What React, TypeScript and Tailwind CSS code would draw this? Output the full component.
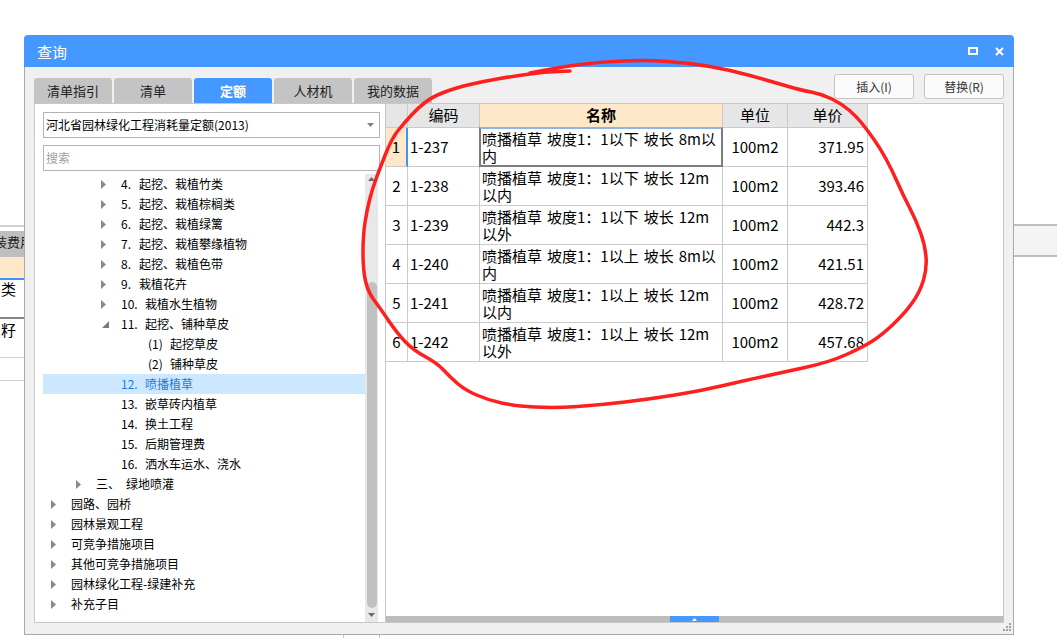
import React from "react";

const FONT = "font-['Noto_Sans_CJK_SC','Noto_Sans',sans-serif]";

type TreeRow = {
  pad: string;
  tri: "c" | "e" | null;
  num?: string;
  numW?: string;
  text: string;
  sel?: boolean;
};

const treeRows: TreeRow[] = [
  { pad: "pl-[58px]", tri: "c", num: "4.", numW: "w-[18px]", text: "起挖、栽植竹类" },
  { pad: "pl-[58px]", tri: "c", num: "5.", numW: "w-[18px]", text: "起挖、栽植棕榈类" },
  { pad: "pl-[58px]", tri: "c", num: "6.", numW: "w-[18px]", text: "起挖、栽植绿篱" },
  { pad: "pl-[58px]", tri: "c", num: "7.", numW: "w-[18px]", text: "起挖、栽植攀缘植物" },
  { pad: "pl-[58px]", tri: "c", num: "8.", numW: "w-[18px]", text: "起挖、栽植色带" },
  { pad: "pl-[58px]", tri: "c", num: "9.", numW: "w-[18px]", text: "栽植花卉" },
  { pad: "pl-[58px]", tri: "c", num: "10.", numW: "w-[24px]", text: "栽植水生植物" },
  { pad: "pl-[58px]", tri: "e", num: "11.", numW: "w-[24px]", text: "起挖、铺种草皮" },
  { pad: "pl-[85px]", tri: null, num: "(1)", numW: "w-[22px]", text: "起挖草皮" },
  { pad: "pl-[85px]", tri: null, num: "(2)", numW: "w-[22px]", text: "铺种草皮" },
  { pad: "pl-[58px]", tri: null, num: "12.", numW: "w-[24px]", text: "喷播植草", sel: true },
  { pad: "pl-[58px]", tri: null, num: "13.", numW: "w-[24px]", text: "嵌草砖内植草" },
  { pad: "pl-[58px]", tri: null, num: "14.", numW: "w-[24px]", text: "换土工程" },
  { pad: "pl-[58px]", tri: null, num: "15.", numW: "w-[24px]", text: "后期管理费" },
  { pad: "pl-[58px]", tri: null, num: "16.", numW: "w-[24px]", text: "洒水车运水、浇水" },
  { pad: "pl-[33px]", tri: "c", num: "三、", numW: "w-[30px]", text: "绿地喷灌" },
  { pad: "pl-[8px]", tri: "c", text: "园路、园桥" },
  { pad: "pl-[8px]", tri: "c", text: "园林景观工程" },
  { pad: "pl-[8px]", tri: "c", text: "可竞争措施项目" },
  { pad: "pl-[8px]", tri: "c", text: "其他可竞争措施项目" },
  { pad: "pl-[8px]", tri: "c", text: "园林绿化工程-绿建补充" },
  { pad: "pl-[8px]", tri: "c", text: "补充子目" },
];

const S = "\u2004";

const gridRows = [
  { code: "1-237", l1: `喷播植草${S}坡度1：1以下${S}坡长${S}8m以`, l2: "内", unit: "100m2", price: "371.95" },
  { code: "1-238", l1: `喷播植草${S}坡度1：1以下${S}坡长${S}12m`, l2: "以内", unit: "100m2", price: "393.46" },
  { code: "1-239", l1: `喷播植草${S}坡度1：1以下${S}坡长${S}12m`, l2: "以外", unit: "100m2", price: "442.3" },
  { code: "1-240", l1: `喷播植草${S}坡度1：1以上${S}坡长${S}8m以`, l2: "内", unit: "100m2", price: "421.51" },
  { code: "1-241", l1: `喷播植草${S}坡度1：1以上${S}坡长${S}12m`, l2: "以内", unit: "100m2", price: "428.72" },
  { code: "1-242", l1: `喷播植草${S}坡度1：1以上${S}坡长${S}12m`, l2: "以外", unit: "100m2", price: "457.68" },
];

const loop: [number, number][] = [
  [530, 73], [560, 67], [600, 62], [645, 60], [690, 63], [730, 70], [770, 81], [800, 90],
  [822, 94], [842, 104], [857, 117], [868, 131], [880, 148], [892, 170], [903, 195],
  [916, 220], [925, 245], [927, 268], [920, 292], [905, 313], [882, 335], [863, 347],
  [830, 362], [780, 373], [747, 380], [700, 391], [650, 399], [600, 405], [555, 408],
  [515, 406], [488, 400], [465, 390], [450, 377], [437, 363], [413, 350], [397, 333],
  [380, 308], [368, 292], [363, 270], [363, 235], [367, 210], [372, 190], [380, 168],
  [392, 138], [405, 122], [418, 108], [432, 97], [455, 88], [485, 81], [515, 76],
  [545, 72], [570, 71],
];

function smoothPath(pts: [number, number][]) {
  let d = `M${pts[0][0]} ${pts[0][1]}`;
  for (let i = 1; i < pts.length - 1; i++) {
    const [x1, y1] = pts[i];
    const [x2, y2] = pts[i + 1];
    d += ` Q${x1} ${y1} ${(x1 + x2) / 2} ${(y1 + y2) / 2}`;
  }
  const last = pts[pts.length - 1];
  d += ` L${last[0]} ${last[1]}`;
  return d;
}

function TriClosed() {
  return (
    <svg width="5" height="9" viewBox="0 0 5 9">
      <path d="M0 0L5 4.5L0 9Z" fill="#8a8a8a" />
    </svg>
  );
}

function TriOpen() {
  return (
    <svg width="7" height="7" viewBox="0 0 7 7" className="ml-[1px]">
      <path d="M7 0L7 7L0 7Z" fill="#7a7a7a" />
    </svg>
  );
}

function Background() {
  return (
    <div className="absolute inset-0 flex">
      <div className="w-[24px] flex flex-col overflow-hidden">
        <div className="h-[225px] shrink-0" />
        <div className="h-[2px] shrink-0 bg-[#d2d2d2]" />
        <div className="h-[4px] shrink-0" />
        <div className="h-[26px] shrink-0 bg-[#bebebe] -ml-[6px] pt-[2px] whitespace-nowrap text-[13px] leading-[18px] text-[#222]">
          装费用
        </div>
        <div className="h-[21px] shrink-0 bg-[#fee8c9]" />
        <div className="h-[2px] shrink-0 bg-[#3f93ff]" />
        <div className="h-[37px] shrink-0 pl-[1px] text-[15px] leading-[17px] text-black">类</div>
        <div className="h-[2px] shrink-0 bg-[#858585]" />
        <div className="h-[38px] shrink-0 pl-[1px] pt-[2px] text-[15px] leading-[17px] text-black">籽</div>
        <div className="h-[1px] shrink-0 bg-[#d2d2d2]" />
        <div className="h-[22px] shrink-0" />
        <div className="h-[1px] shrink-0 bg-[#d2d2d2]" />
      </div>
      <div className="flex-1 flex flex-col">
        <div className="h-[634px] shrink-0" />
        <div className="ml-[319px] w-[37px] flex-1 border-x border-[#c8c8c8]" />
      </div>
      <div className="w-[43px] flex flex-col">
        <div className="h-[224px] shrink-0" />
        <div className="h-[33px] shrink-0 border-y-2 border-[#bdbdbd] bg-[#f4f4f4]" />
      </div>
    </div>
  );
}

function TitleBar() {
  return (
    <div className="h-[32px] shrink-0 bg-[#4598ff] rounded-t-[4px] flex items-center pl-[13px] pr-[10px]">
      <span className="text-white text-[15px] leading-none">查询</span>
      <svg className="ml-auto" width="10" height="8" viewBox="0 0 10 8">
        <rect x="1" y="1" width="8" height="6" fill="none" stroke="white" strokeWidth="2" />
      </svg>
      <svg className="ml-[17px]" width="9" height="9" viewBox="0 0 9 9">
        <path d="M1 1L8 8M8 1L1 8" stroke="white" strokeWidth="2" />
      </svg>
    </div>
  );
}

function Tabs() {
  const tabs = ["清单指引", "清单", "定额", "人材机", "我的数据"];
  return (
    <div className="mt-[11px] flex gap-[2px]">
      {tabs.map((t) =>
        t === "定额" ? (
          <div
            key={t}
            className="w-[78px] h-[25px] rounded-t-[3px] bg-[#4598ff] text-white font-bold text-[13px] flex items-center justify-center"
          >
            {t}
          </div>
        ) : (
          <div
            key={t}
            className="w-[78px] h-[25px] rounded-t-[3px] bg-[#c4c4c4] text-[#222] text-[13px] flex items-center justify-center"
          >
            {t}
          </div>
        )
      )}
    </div>
  );
}

function LeftPanel() {
  return (
    <div className="w-[351px] h-full shrink-0 bg-white border-l border-y border-[#c8c8c8] flex flex-col pl-[8px] pr-[5px] pt-[8px]">
      <div className="h-[26px] shrink-0 border border-[#b4b4b4] flex items-center pl-[2px] pr-[5px] text-[12px] text-black whitespace-nowrap">
        <span>河北省园林绿化工程消耗量定额(2013)</span>
        <svg className="ml-auto" width="7" height="4" viewBox="0 0 7 4">
          <path d="M0 0H7L3.5 4Z" fill="#808080" />
        </svg>
      </div>
      <div className="mt-[7px] h-[26px] shrink-0 border border-[#b4b4b4] flex items-center pl-[2px] text-[12px] text-[#a0a0a0]">
        搜索
      </div>
      <div className="mt-[3px] flex-1 min-h-0 flex">
        <div className="flex-1 flex flex-col overflow-hidden">
          {treeRows.map((r, i) => (
            <div
              key={i}
              className={`h-[20px] shrink-0 flex items-center whitespace-nowrap text-[12px] ${r.pad} ${
                r.sel ? "bg-[#cce8ff] text-[#1f7ae0]" : "text-black"
              }`}
            >
              <div className="w-[20px] shrink-0 flex items-center">
                {r.tri === "c" ? <TriClosed /> : r.tri === "e" ? <TriOpen /> : null}
              </div>
              {r.num ? <span className={`inline-block shrink-0 ${r.numW}`}>{r.num}</span> : null}
              <span>{r.text}</span>
            </div>
          ))}
        </div>
        <div className="w-[13px] mr-[2px] shrink-0 bg-[#e8e8e8] flex flex-col">
          <div className="h-[10px] shrink-0 flex items-center justify-center">
            <svg width="7" height="4" viewBox="0 0 7 4">
              <path d="M3.5 0L7 4H0Z" fill="#6a6a6a" />
            </svg>
          </div>
          <div className="h-[98px] shrink-0" />
          <div className="h-[326px] shrink-0 ml-[2px] mr-[1px] rounded-full bg-[#c1c1c1]" />
          <div className="flex-1 flex items-center justify-center">
            <svg width="7" height="4" viewBox="0 0 7 4">
              <path d="M0 0H7L3.5 4Z" fill="#6a6a6a" />
            </svg>
          </div>
        </div>
      </div>
    </div>
  );
}

const cell = "shrink-0 border-r border-b border-[#cacaca]";

function RightPanel() {
  return (
    <div className="flex-1 h-full bg-white border border-[#c8c8c8] flex flex-col">
      <div className="flex-1 min-h-0 flex flex-col text-[15px] text-black">
        <div className="flex h-[24px] shrink-0">
          <div className={`w-[22px] bg-[#e6e6e6] ${cell}`} />
          <div className={`w-[72px] bg-[#e6e6e6] ${cell} flex items-center justify-center`}>编码</div>
          <div className={`w-[243px] bg-[#fee8c9] font-bold ${cell} flex items-center justify-center`}>名称</div>
          <div className={`w-[65px] bg-[#e6e6e6] ${cell} flex items-center justify-center`}>单位</div>
          <div className={`w-[80px] bg-[#e6e6e6] ${cell} flex items-center justify-center`}>单价</div>
        </div>
        {gridRows.map((r, i) => (
          <div key={r.code} className="flex h-[39px] shrink-0">
            <div
              className={`w-[22px] ${cell} flex items-center justify-center ${
                i === 0 ? "bg-[#fee8c9] border-r-2 border-r-[#3f93ff]" : ""
              }`}
            >
              {i + 1}
            </div>
            <div className={`w-[72px] ${cell} flex items-center pl-[2px]`}>{r.code}</div>
            <div className={`w-[243px] ${cell} relative pl-[2px] pt-[2px] leading-[17px] whitespace-nowrap`}>
              <div>{r.l1}</div>
              <div>{r.l2}</div>
              {i === 0 ? (
                <div className="absolute -left-px -top-px -right-px -bottom-px border-2 border-[#7c7c7c] border-t-[#8fb4e6]" />
              ) : null}
            </div>
            <div className={`w-[65px] ${cell} flex items-center justify-center`}>{r.unit}</div>
            <div className={`w-[80px] ${cell} flex items-center justify-end pr-[3px]`}>{r.price}</div>
          </div>
        ))}
      </div>
      <div className="h-[6px] shrink-0 bg-[#bdbdbd] flex">
        <div className="ml-[284px] w-[49px] bg-[#4598ff] flex items-center justify-center">
          <svg width="5" height="3" viewBox="0 0 5 3">
            <path d="M2.5 0L5 3H0Z" fill="white" />
          </svg>
        </div>
      </div>
    </div>
  );
}

function Grip() {
  const dots: [number, number][] = [
    [7, 0],
    [4, 3],
    [7, 3],
    [1, 6],
    [4, 6],
    [7, 6],
  ];
  return (
    <svg className="absolute right-[2px] bottom-[3px]" width="9" height="8" viewBox="0 0 9 8">
      {dots.map(([x, y], i) => (
        <rect key={i} x={x} y={y} width="2" height="2" fill="#a0a0a0" />
      ))}
    </svg>
  );
}

function Dialog() {
  return (
    <div className="absolute left-[24px] top-[35px] w-[990px] h-[600px] flex flex-col">
      <TitleBar />
      <div className="flex-1 relative flex flex-col bg-[#f0f0f0] border-x border-b border-[#a8a8a8] px-[9px]">
        <div className="h-[36px] shrink-0 flex">
          <Tabs />
          <div className="ml-auto mt-[7px] flex gap-[10px] h-[25px]">
            <div className="w-[80px] h-[25px] bg-[#fbfbfb] border border-[#c4c4c4] rounded-[3px] text-[12px] text-[#333] flex items-center justify-center">
              插入(I)
            </div>
            <div className="w-[80px] h-[25px] bg-[#fbfbfb] border border-[#c4c4c4] rounded-[3px] text-[12px] text-[#333] flex items-center justify-center">
              替换(R)
            </div>
          </div>
        </div>
        <div className="h-[520px] shrink-0 flex">
          <LeftPanel />
          <RightPanel />
        </div>
        <Grip />
      </div>
    </div>
  );
}

function RedMark() {
  return (
    <svg className="absolute inset-0 pointer-events-none" width="1057" height="638" viewBox="0 0 1057 638">
      <path
        d={smoothPath(loop)}
        fill="none"
        stroke="#ff1f1f"
        strokeWidth="3.5"
        strokeLinecap="round"
        strokeLinejoin="round"
      />
    </svg>
  );
}

export default function App() {
  return (
    <div className={`relative w-[1057px] h-[638px] overflow-hidden bg-white ${FONT}`}>
      <Background />
      <Dialog />
      <RedMark />
    </div>
  );
}
